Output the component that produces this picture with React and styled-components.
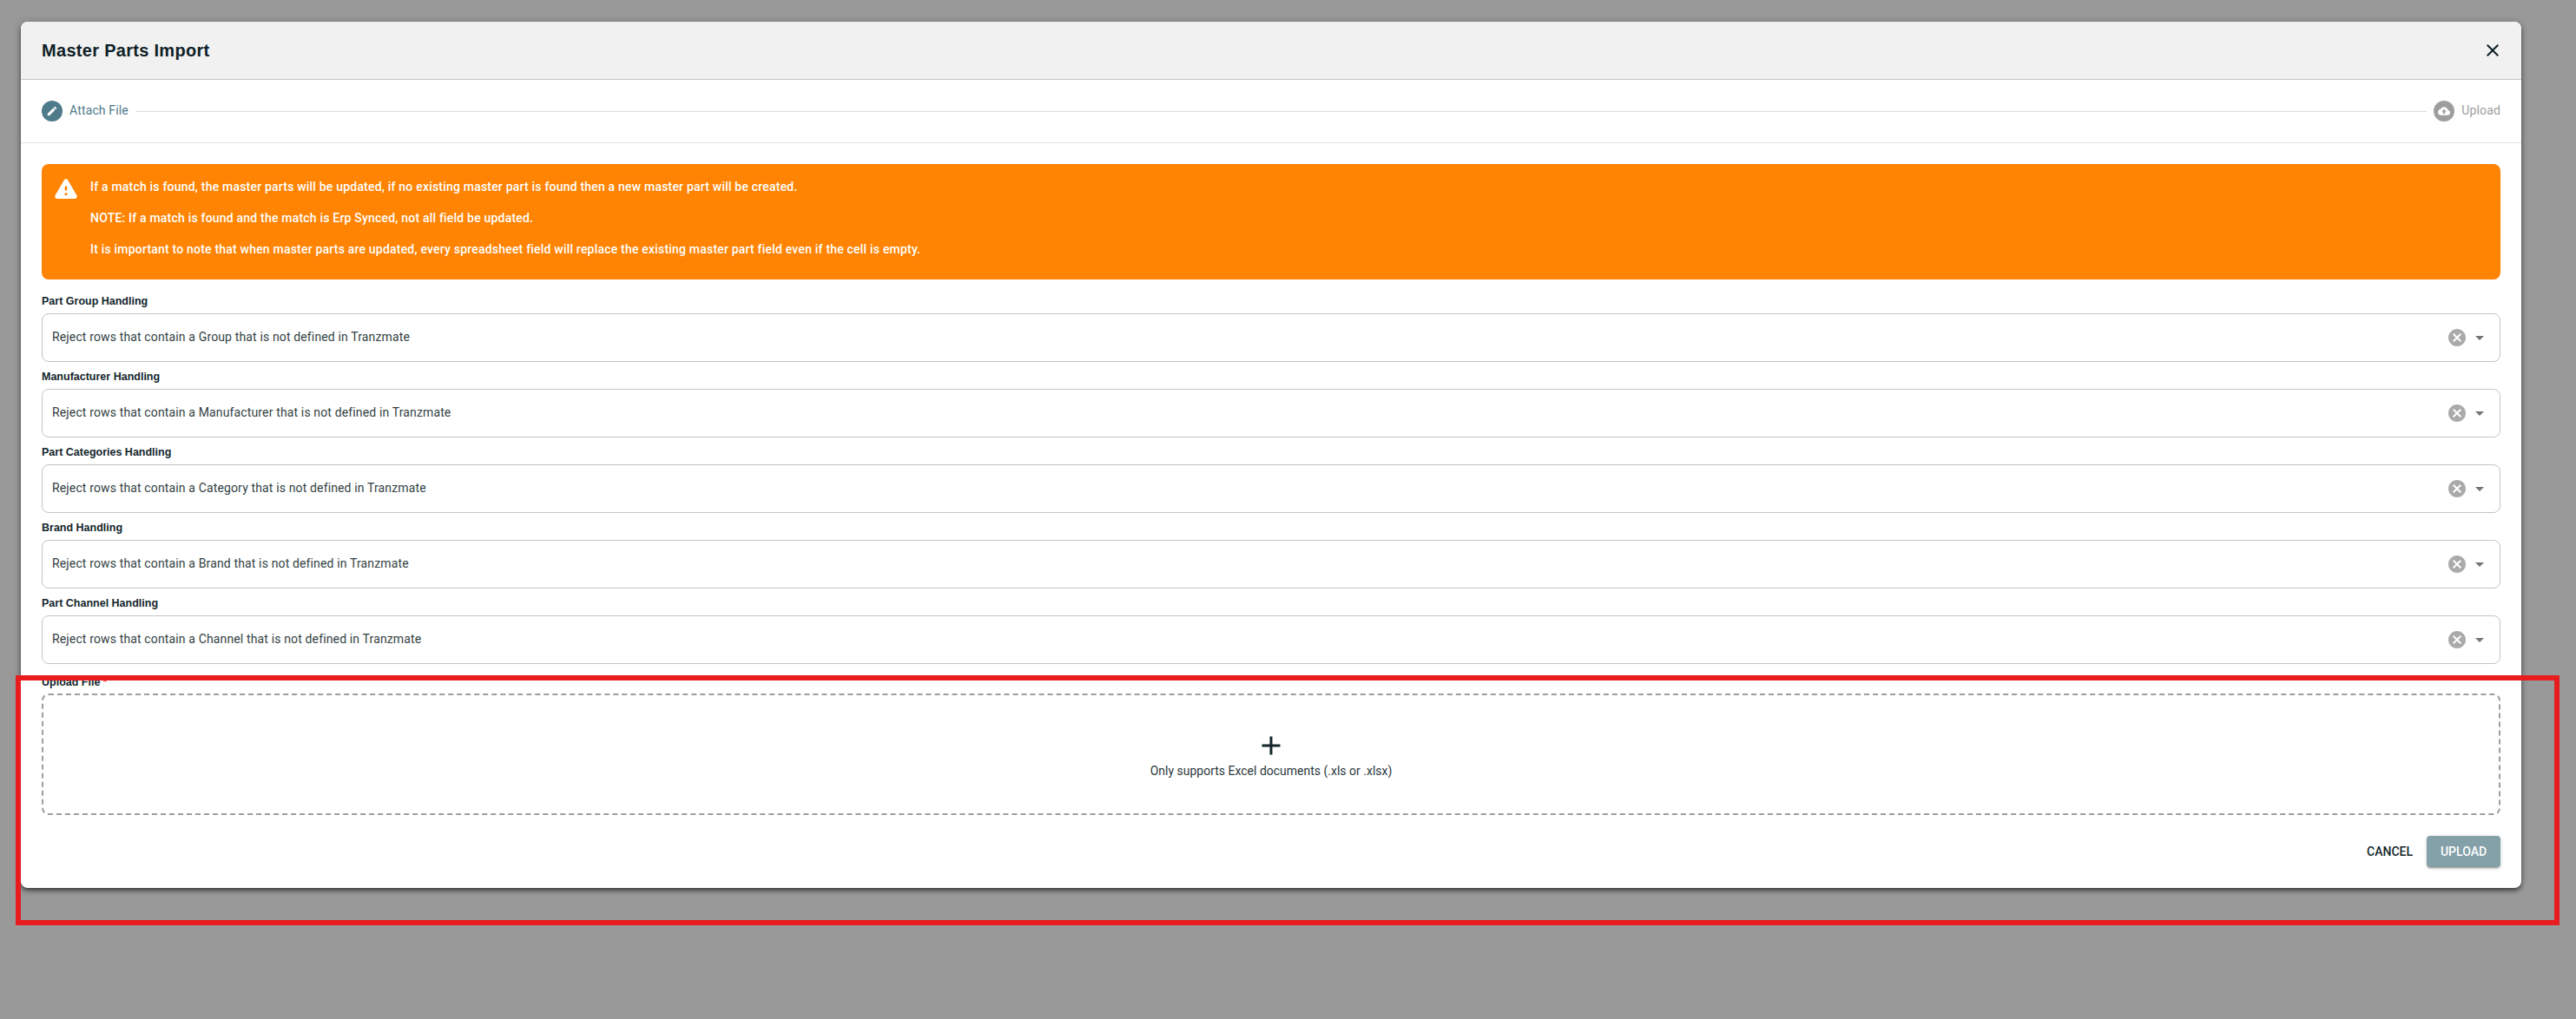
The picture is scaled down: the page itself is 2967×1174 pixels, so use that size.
import React from "react";
import styled, { createGlobalStyle } from "styled-components";

const Global = createGlobalStyle`
  html, body { margin: 0; padding: 0; background: #999; }
  body { font-family: Roboto, "Liberation Sans", sans-serif; color: #12252b; }
`;

const Page = styled.div`
  position: relative;
  width: 2967px;
  height: 1174px;
  box-sizing: border-box;
  padding: 25px 0 0 24px;
  background: #999;
  overflow: hidden;
`;

const Modal = styled.div`
  width: 2880px;
  height: 998px;
  display: flex;
  flex-direction: column;
  background: #fff;
  border-radius: 8px;
  box-shadow: 0 2px 4px -1px rgba(0,0,0,.4), 0 4px 5px 0 rgba(0,0,0,.28), 0 1px 10px 0 rgba(0,0,0,.24);
  overflow: hidden;
`;

const Header = styled.header`
  flex: none;
  height: 66px;
  box-sizing: content-box;
  display: flex;
  align-items: center;
  justify-content: space-between;
  padding: 0 21px 0 24px;
  background: #f1f1f1;
  border-bottom: 1px solid #c6c6c6;
`;

const Title = styled.h2`
  margin: 0;
  font: 700 20px/24px "Liberation Sans", Arial, sans-serif;
  letter-spacing: 0.3px;
  color: #0f2026;
`;

const Stepper = styled.div`
  flex: none;
  height: 72px;
  display: flex;
  align-items: center;
  gap: 8px;
  padding: 0 24px;
  border-bottom: 1px solid #e2e2e2;
`;

const StepDot = styled.span`
  width: 24px;
  height: 24px;
  flex: none;
  border-radius: 50%;
  display: flex;
  align-items: center;
  justify-content: center;
  background: ${(p) => (p.$active ? "#4f7a8a" : "#9e9e9e")};
`;

const StepLabel = styled.span`
  font-size: 14px;
  line-height: 20px;
  letter-spacing: 0.15px;
  margin-top: -2px;
  color: ${(p) => (p.$active ? "#4f7a8a" : "#9e9e9e")};
`;

const StepLine = styled.span`
  flex: 1;
  height: 1px;
  background: #dcdcdc;
`;

const Body = styled.div`
  flex: 1;
  display: flex;
  flex-direction: column;
  padding: 24px;
`;

const Alert = styled.div`
  height: 133px;
  box-sizing: border-box;
  display: flex;
  gap: 12px;
  padding: 12px;
  background: #ff8403;
  border-radius: 8px;
  color: #fff;
`;

const AlertText = styled.div`
  padding-top: 4px;
  font-size: 14px;
  font-weight: 500;
  line-height: 20px;
  letter-spacing: 0.2px;
  p { margin: 0 0 16px; }
`;

const Field = styled.div`
  margin-top: 15px;
  & + & { margin-top: 7px; }
`;

const Label = styled.label`
  display: block;
  height: 20px;
  margin-bottom: 4px;
  font: 700 12.5px/20px "Liberation Sans", Arial, sans-serif;
  letter-spacing: 0;
  color: #12252b;
`;

const Select = styled.div`
  height: 56px;
  box-sizing: border-box;
  display: flex;
  align-items: center;
  padding: 0 11px;
  border: 1px solid #c4c4c4;
  border-radius: 8px;
`;

const SelectValue = styled.span`
  flex: 1;
  font-size: 14px;
  line-height: 20px;
  letter-spacing: 0.14px;
  margin-top: -2px;
  color: #333f43;
`;

const UploadSection = styled.div`
  margin-top: 11px;
`;

const UploadLabel = styled(Label)`
  margin-bottom: 3px;
`;

const Required = styled.span`
  color: #f44336;
  margin-left: 3px;
`;

const Dropzone = styled.div`
  height: 140px;
  box-sizing: border-box;
  display: flex;
  flex-direction: column;
  align-items: center;
  justify-content: center;
  border: 2px dashed #9e9e9e;
  border-radius: 8px;
`;

const DropHint = styled.span`
  font-size: 14px;
  line-height: 20px;
  color: #2b373b;
`;

const Footer = styled.div`
  margin-top: 24px;
  display: flex;
  justify-content: flex-end;
  align-items: center;
  gap: 16px;
`;

const TextButton = styled.button`
  border: 0;
  background: none;
  padding: 0;
  font: 500 14px/36px Roboto, sans-serif;
  color: #12252b;
`;

const PrimaryButton = styled.button`
  width: 85px;
  height: 36px;
  border: 0;
  border-radius: 4px;
  padding: 0;
  background: #84a0a8;
  color: #fff;
  font: 500 14px/36px Roboto, sans-serif;
  box-shadow: 0 3px 1px -2px rgba(0,0,0,.2), 0 2px 2px 0 rgba(0,0,0,.14), 0 1px 5px 0 rgba(0,0,0,.12);
`;

const Annotation = styled.div`
  position: absolute;
  left: 18px;
  top: 778px;
  width: 2930px;
  height: 288px;
  box-sizing: border-box;
  border: 6px solid #e81c1f;
  pointer-events: none;
`;

const Icon = ({ d, size = 24, color = "currentColor", style }) => (
  <svg width={size} height={size} viewBox="0 0 24 24" fill={color} style={{ flex: "none", display: "block", ...style }}>
    <path d={d} />
  </svg>
);

const paths = {
  close: "M19 6.41 17.59 5 12 10.59 6.41 5 5 6.41 10.59 12 5 17.59 6.41 19 12 13.41 17.59 19 19 17.59 13.41 12z",
  edit: "M3 17.25V21h3.75L17.81 9.94l-3.75-3.75L3 17.25zM20.71 7.04c.39-.39.39-1.02 0-1.41l-2.34-2.34a.9959.9959 0 0 0-1.41 0l-1.83 1.83 3.75 3.75 1.83-1.83z",
  cloud: "M19.35 10.04C18.67 6.59 15.64 4 12 4 9.11 4 6.6 5.64 5.35 8.04 2.34 8.36 0 10.91 0 14c0 3.31 2.69 6 6 6h13c2.76 0 5-2.24 5-5 0-2.64-2.05-4.78-4.65-4.96zM14 13v4h-4v-4H7l5-5 5 5h-3z",
  warning: "M4.47 21h15.06c1.54 0 2.5-1.67 1.73-3L13.73 4.99c-.77-1.33-2.69-1.33-3.46 0L2.74 18c-.77 1.33.19 3 1.73 3zM12 14c-.55 0-1-.45-1-1v-2c0-.55.45-1 1-1s1 .45 1 1v2c0 .55-.45 1-1 1zm1 4h-2v-2h2v2z",
  cancel: "M12 2C6.47 2 2 6.47 2 12s4.47 10 10 10 10-4.47 10-10S17.53 2 12 2zm5 13.59L15.59 17 12 13.41 8.41 17 7 15.59 10.59 12 7 8.41 8.41 7 12 10.59 15.59 7 17 8.41 13.41 12 17 15.59z",
  caret: "m7 10 5 5 5-5z",
  add: "M19 13h-6v6h-2v-6H5v-2h6V5h2v6h6v2z",
};

const fields = [
  ["Part Group Handling", "Group"],
  ["Manufacturer Handling", "Manufacturer"],
  ["Part Categories Handling", "Category"],
  ["Brand Handling", "Brand"],
  ["Part Channel Handling", "Channel"],
];

export default function App() {
  return (
    <>
      <Global />
      <Page>
        <Modal>
          <Header>
            <Title>Master Parts Import</Title>
            <Icon d={paths.close} color="#0f2026" />
          </Header>
          <Stepper>
            <StepDot $active><Icon d={paths.edit} size={14} color="#fff" /></StepDot>
            <StepLabel $active>Attach File</StepLabel>
            <StepLine />
            <StepDot><Icon d={paths.cloud} size={14} color="#fff" /></StepDot>
            <StepLabel>Upload</StepLabel>
          </Stepper>
          <Body>
            <Alert>
              <Icon d={paths.warning} size={32} color="#fff" />
              <AlertText>
                <p>If a match is found, the master parts will be updated, if no existing master part is found then a new master part will be created.</p>
                <p>NOTE: If a match is found and the match is Erp Synced, not all field be updated.</p>
                <p>It is important to note that when master parts are updated, every spreadsheet field will replace the existing master part field even if the cell is empty.</p>
              </AlertText>
            </Alert>
            {fields.map(([label, noun]) => (
              <Field key={label}>
                <Label>{label}</Label>
                <Select>
                  <SelectValue>Reject rows that contain a {noun} that is not defined in Tranzmate</SelectValue>
                  <Icon d={paths.cancel} color="#aaaaaa" />
                  <Icon d={paths.caret} color="#757575" style={{ marginLeft: 2 }} />
                </Select>
              </Field>
            ))}
            <UploadSection>
              <UploadLabel>Upload File<Required>*</Required></UploadLabel>
              <Dropzone>
                <Icon d={paths.add} size={36} color="#12252b" style={{ marginTop: 1, marginBottom: 1 }} />
                <DropHint>Only supports Excel documents (.xls or .xlsx)</DropHint>
              </Dropzone>
            </UploadSection>
            <Footer>
              <TextButton>CANCEL</TextButton>
              <PrimaryButton>UPLOAD</PrimaryButton>
            </Footer>
          </Body>
        </Modal>
        <Annotation />
      </Page>
    </>
  );
}
